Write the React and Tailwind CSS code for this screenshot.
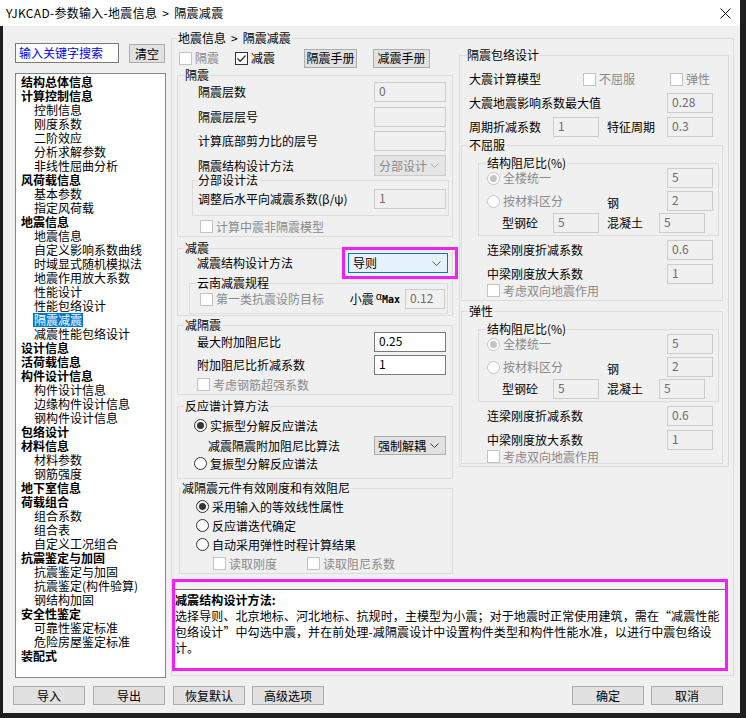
import React from "react";

const DIS = "text-[#8a8a8a]";

const Check = ({ label, checked, disabled, className = "" }) => (
  <div className={`flex items-center h-[13px] ${className}`}>
    <span
      className={`w-[13px] h-[13px] shrink-0 border bg-white flex items-center justify-center ${
        disabled ? "border-[#c4c4c4]" : "border-[#333333]"
      }`}
    >
      {checked && (
        <svg width="11" height="11" viewBox="0 0 11 11">
          <path d="M1.5 5.5 L4.2 8.2 L9.5 2.5" fill="none" stroke="#333333" strokeWidth="1.3" />
        </svg>
      )}
    </span>
    <span className={`ml-[3px] whitespace-nowrap ${disabled ? DIS : ""}`}>{label}</span>
  </div>
);

const Radio = ({ label, checked, disabled, className = "" }) => (
  <div className={`flex items-center h-[13px] ${className}`}>
    <span
      className={`w-[13px] h-[13px] shrink-0 rounded-full border bg-white flex items-center justify-center ${
        disabled ? "border-[#c4c4c4]" : "border-[#333333]"
      }`}
    >
      {checked && (
        <span className={`w-[7px] h-[7px] rounded-full ${disabled ? "bg-[#c4c4c4]" : "bg-[#333333]"}`} />
      )}
    </span>
    <span className={`ml-[3px] whitespace-nowrap ${disabled ? DIS : ""}`}>{label}</span>
  </div>
);

const Field = ({ value, disabled, className = "" }) => (
  <div
    className={`h-[20px] shrink-0 border pl-[4px] leading-[16px] ${
      disabled ? "border-[#cccccc] bg-[#f0f0f0] text-[#6d6d6d]" : "border-[#7a7a7a] bg-white"
    } ${className}`}
  >
    {value}
  </div>
);

const Chevron = ({ color = "#606060" }) => (
  <svg width="9" height="5" viewBox="0 0 9 5">
    <path d="M0.5 0.5 L4.5 4.5 L8.5 0.5" fill="none" stroke={color} strokeWidth="1" />
  </svg>
);

const Btn = ({ children, className = "" }) => (
  <div
    className={`h-[19px] border border-[#adadad] bg-[#e1e1e1] flex items-center justify-center whitespace-nowrap ${className}`}
  >
    {children}
  </div>
);

const Group = ({ title, className = "", legend = "ml-[6px]", children }) => (
  <fieldset className={`border border-[#dcdcdc] min-w-0 ${className}`}>
    <legend className={`px-[1px] leading-[14px] h-[14px] whitespace-nowrap ${legend}`}>{title}</legend>
    {children}
  </fieldset>
);

const Row = ({ label, children, className = "" }) => (
  <div className={`flex items-center justify-between h-[20px] ${className}`}>
    <span className="whitespace-nowrap">{label}</span>
    {children}
  </div>
);

const tree = [
  ["结构总体信息", 1],
  ["计算控制信息", 1],
  ["控制信息"],
  ["刚度系数"],
  ["二阶效应"],
  ["分析求解参数"],
  ["非线性屈曲分析"],
  ["风荷载信息", 1],
  ["基本参数"],
  ["指定风荷载"],
  ["地震信息", 1],
  ["地震信息"],
  ["自定义影响系数曲线"],
  ["时域显式随机模拟法"],
  ["地震作用放大系数"],
  ["性能设计"],
  ["性能包络设计"],
  ["隔震减震", 0, 1],
  ["减震性能包络设计"],
  ["设计信息", 1],
  ["活荷载信息", 1],
  ["构件设计信息", 1],
  ["构件设计信息"],
  ["边缘构件设计信息"],
  ["钢构件设计信息"],
  ["包络设计", 1],
  ["材料信息", 1],
  ["材料参数"],
  ["钢筋强度"],
  ["地下室信息", 1],
  ["荷载组合", 1],
  ["组合系数"],
  ["组合表"],
  ["自定义工况组合"],
  ["抗震鉴定与加固", 1],
  ["抗震鉴定与加固"],
  ["抗震鉴定(构件验算)"],
  ["钢结构加固"],
  ["安全性鉴定", 1],
  ["可靠性鉴定标准"],
  ["危险房屋鉴定标准"],
  ["装配式", 1],
];

// 不屈服 / 弹性 block
const Envelope = ({ title, className = "", pb = "pb-[3px]" }) => (
  <Group title={title} className={`ml-[1px] w-[262px] ${className} ${pb}`}>
    <Group title="结构阻尼比(%)" className="ml-[16px] mt-[4px] w-[241px] pb-[2px]" legend="ml-[7px]">
      <div className="-mt-[2px] pl-[8px]">
        <div className="flex items-center h-[20px]">
          <div className="w-[180px]">
            <Radio label="全楼统一" checked disabled />
          </div>
          <Field value="5" disabled className="w-[46px]" />
        </div>
        <div className="flex items-center h-[20px] mt-[3px]">
          <div className="w-[120px]">
            <Radio label="按材料区分" disabled />
          </div>
          <span className="w-[60px] mt-[3px]">钢</span>
          <Field value="2" disabled className="w-[46px]" />
        </div>
        <div className="flex items-center h-[20px] mt-[2px]">
          <span className="w-[66px] pl-[15px]">型钢砼</span>
          <Field value="5" disabled className="w-[46px]" />
          <span className="w-[60px] pl-[8px]">混凝土</span>
          <Field value="5" disabled className="w-[46px]" />
        </div>
      </div>
    </Group>
    <div className="pl-[25px] pr-[9px]">
      <Row label="连梁刚度折减系数" className="mt-[4px]">
        <Field value="0.6" disabled className="w-[46px]" />
      </Row>
      <Row label="中梁刚度放大系数" className="mt-[4px]">
        <Field value="1" disabled className="w-[46px]" />
      </Row>
      <Check label="考虑双向地震作用" disabled />
    </div>
  </Group>
);

export default function App() {
  return (
    <div className="w-[746px] h-[718px] bg-[#1e1e1e] overflow-hidden text-[12px] leading-[14px] text-black [font-family:'Noto_Sans_CJK_SC','Noto_Sans',sans-serif]">
      <div className="w-[740px] h-[713px] flex flex-col">
        {/* title bar */}
        <div className="h-[26px] bg-white flex items-center justify-between pl-[6px] pr-[9px] shrink-0">
          <span className="text-[12px] tracking-[0.3px]">
            YJKCAD-参数输入-地震信息<span className="mx-[5px]">&gt;</span>隔震减震
          </span>
          <svg width="11" height="11" viewBox="0 0 11 11">
            <path d="M0.5 0.5 L10.5 10.5 M10.5 0.5 L0.5 10.5" stroke="#111" strokeWidth="1" />
          </svg>
        </div>

        <div className="flex-1 bg-[#f0f0f0] border-l-[3px] border-[#1e1e1e] flex flex-col">
          <div className="flex">
            {/* left column */}
            <div className="w-[151px] ml-[12px] pt-[17px] flex flex-col shrink-0">
              <div className="flex items-start h-[20px]">
                <div className="w-[104px] h-[20px] border border-[#7a7a7a] bg-white text-[#0000ff] pl-[3px] leading-[18px]">
                  输入关键字搜索
                </div>
                <Btn className="ml-[10px] mt-[1px] w-[36px] h-[18px]">清空</Btn>
              </div>
              <div className="mt-[10px] h-[605px] border border-[#828790] bg-white pt-[1px]">
                {tree.map(([t, bold, sel], i) =>
                  bold ? (
                    <div key={i} className="h-[14px] leading-[14px] pl-[5px] font-bold whitespace-nowrap">
                      {t}
                    </div>
                  ) : sel ? (
                    <div key={i} className="h-[14px] leading-[14px] ml-[17px] px-[1px] w-fit bg-[#0078d7] text-white whitespace-nowrap">
                      {t}
                    </div>
                  ) : (
                    <div key={i} className="h-[14px] leading-[14px] pl-[18px] whitespace-nowrap">
                      {t}
                    </div>
                  )
                )}
              </div>
            </div>

            {/* main group */}
            <Group
              title={
                <>
                  地震信息<span className="mx-[5px]">&gt;</span>隔震减震
                </>
              }
              className="ml-[5px] mt-[5px] w-[563px] h-[645px] shrink-0"
              legend="ml-[5px]"
            >
              <div className="flex pl-[5px] pr-[4px]">
                {/* left settings column */}
                <div className="w-[276px] flex flex-col">
                  <div className="mt-[3px] h-[20px] flex items-center">
                    <Check label="隔震" disabled className="ml-[2px]" />
                    <Check label="减震" checked className="ml-[16px]" />
                    <Btn className="ml-[29px] w-[53px] h-[18px]">隔震手册</Btn>
                    <Btn className="ml-[16px] w-[57px] h-[18px]">减震手册</Btn>
                  </div>

                  <Group title="隔震" className="pb-[3px]">
                    <div className="pl-[20px] pr-[6px]">
                      <Row label="隔震层数">
                        <Field value="0" disabled className="w-[72px]" />
                      </Row>
                      <Row label="隔震层层号" className="mt-[5px]">
                        <Field value="" disabled className="w-[72px]" />
                      </Row>
                      <Row label="计算底部剪力比的层号" className="mt-[4px]">
                        <Field value="" disabled className="w-[72px]" />
                      </Row>
                      <Row label="隔震结构设计方法" className="mt-[4px] h-[21px]">
                        <div className="w-[72px] h-[21px] border border-[#cccccc] bg-[#e5e5e5] text-[#8a8a8a] flex items-center justify-between pl-[4px] pr-[6px]">
                          <span>分部设计</span>
                          <Chevron color="#b0b0b0" />
                        </div>
                      </Row>
                    </div>
                    <Group title="分部设计法" className="-mt-[3px] ml-[14px] w-[257px] pb-[6px]" legend="ml-[4px]">
                      <div className="mt-[2px] pl-[5px] pr-[2px]">
                        <Row label="调整后水平向减震系数(β/ψ)">
                          <Field value="1" disabled className="w-[72px]" />
                        </Row>
                      </div>
                    </Group>
                    <Check label="计算中震非隔震模型" disabled className="mt-[4px] ml-[22px]" />
                  </Group>

                  <Group title="减震" className="mt-[4px] pb-[1px]">
                    <div className="-mt-[2px] pl-[19px] pr-[4px]">
                      <Row label="减震结构设计方法">
                        <div className="relative w-[100px] h-[20px] border border-[#0078d7] bg-[#e5f1fb] flex items-center justify-between pl-[4px] pr-[6px]">
                          <span>导则</span>
                          <Chevron />
                          <div className="absolute -left-[7px] -top-[7px] -right-[11px] -bottom-[7px] border-[3px] border-[#f41ff4]" />
                        </div>
                      </Row>
                    </div>
                    <Group title="云南减震规程" className="mt-[3px] ml-[11px] w-[259px] pb-[4px]">
                      <div className="-mt-[1px] h-[20px] flex items-center pl-[10px] pr-[2px]">
                        <Check label="第一类抗震设防目标" disabled />
                        <div className="ml-auto flex items-center">
                          <span>小震</span>
                          <span className="ml-[2px] text-[10px] leading-[10px] -mt-[6px]">α</span>
                          <span className="text-[10px] font-bold leading-[10px] mt-[2px] [font-family:'DejaVu_Sans_Mono',monospace]">Max</span>
                          <Field value="0.12" disabled className="ml-[5px] w-[40px]" />
                        </div>
                      </div>
                    </Group>
                  </Group>

                  <Group title="减隔震" className="mt-[2px] pb-[3px]">
                    <div className="pl-[19px] pr-[6px]">
                      <Row label="最大附加阻尼比">
                        <Field value="0.25" className="w-[72px]" />
                      </Row>
                      <Row label="附加阻尼比折减系数" className="mt-[3px]">
                        <Field value="1" className="w-[72px]" />
                      </Row>
                      <Check label="考虑钢筋超强系数" disabled className="mt-[3px]" />
                    </div>
                  </Group>

                  <Group title="反应谱计算方法" className="mt-[4px] pb-[8px]">
                    <div className="pl-[16px] pr-[6px]">
                      <Radio label="实振型分解反应谱法" checked className="mt-[6px]" />
                      <div className="mt-[4px] h-[19px] flex items-center justify-between pl-[14px]">
                        <span>减震隔震附加阻尼比算法</span>
                        <div className="w-[72px] h-[19px] border border-[#adadad] bg-[#e1e1e1] flex items-center justify-between pl-[3px] pr-[6px]">
                          <span>强制解耦</span>
                          <Chevron color="#404040" />
                        </div>
                      </div>
                      <Radio label="复振型分解反应谱法" className="mt-[2px]" />
                    </div>
                  </Group>

                  <Group title="减隔震元件有效刚度和有效阻尼" className="mt-[2px] ml-[2px] pb-[3px]" legend="ml-[1px]">
                    <div className="pl-[16px]">
                      <Radio label="采用输入的等效线性属性" checked className="mt-[5px]" />
                      <Radio label="反应谱迭代确定" className="mt-[6px]" />
                      <Radio label="自动采用弹性时程计算结果" className="mt-[6px]" />
                      <div className="mt-[6px] flex pl-[17px]">
                        <Check label="读取刚度" disabled />
                        <Check label="读取阻尼系数" disabled className="ml-[30px]" />
                      </div>
                    </div>
                  </Group>
                </div>

                {/* right column */}
                <div className="w-[270px] ml-[6px]">
                  <Group title="隔震包络设计" className="mt-[3px] pb-[2px]">
                    <div className="pl-[9px] pr-[15px]">
                      <div className="mt-[10px] h-[14px] flex items-center">
                        <span className="w-[114px]">大震计算模型</span>
                        <Check label="不屈服" disabled />
                        <Check label="弹性" disabled className="ml-[35px]" />
                      </div>
                      <Row label="大震地震影响系数最大值" className="mt-[7px]">
                        <Field value="0.28" disabled className="w-[46px]" />
                      </Row>
                      <div className="mt-[4px] h-[20px] flex items-center">
                        <span className="w-[84px]">周期折减系数</span>
                        <Field value="1" disabled className="w-[46px]" />
                        <span className="ml-[8px] w-[60px]">特征周期</span>
                        <Field value="0.3" disabled className="w-[46px]" />
                      </div>
                    </div>
                    <Envelope title="不屈服" className="mt-[1px]" />
                    <Envelope title="弹性" className="mt-[3px]" pb="pb-[0px]" />
                  </Group>
                </div>
              </div>

              {/* description */}
              <div className="mt-[5px] h-[92px] w-[556px] border-[3px] border-[#f41ff4] flex flex-col">
                <div className="h-[7px]" />
                <div className="flex-1 bg-white border-t border-[#6d6d6d] pt-[2px] leading-[16px] tracking-[0.1px] whitespace-nowrap">
                  <div className="font-bold">减震结构设计方法:</div>
                  <div>选择导则、北京地标、河北地标、抗规时，主模型为小震；对于地震时正常使用建筑，需在“减震性能</div>
                  <div>包络设计”中勾选中震，并在前处理-减隔震设计中设置构件类型和构件性能水准，以进行中震包络设</div>
                  <div>计。</div>
                </div>
              </div>
            </Group>
          </div>

          {/* bottom buttons */}
          <div className="flex mt-[8px] pl-[10px]">
            <Btn className="w-[72px]">导入</Btn>
            <Btn className="w-[72px] ml-[8px]">导出</Btn>
            <Btn className="w-[72px] ml-[8px]">恢复默认</Btn>
            <Btn className="w-[72px] ml-[7px]">高级选项</Btn>
            <Btn className="w-[72px] ml-[248px]">确定</Btn>
            <Btn className="w-[72px] ml-[7px]">取消</Btn>
          </div>
        </div>
      </div>
    </div>
  );
}
